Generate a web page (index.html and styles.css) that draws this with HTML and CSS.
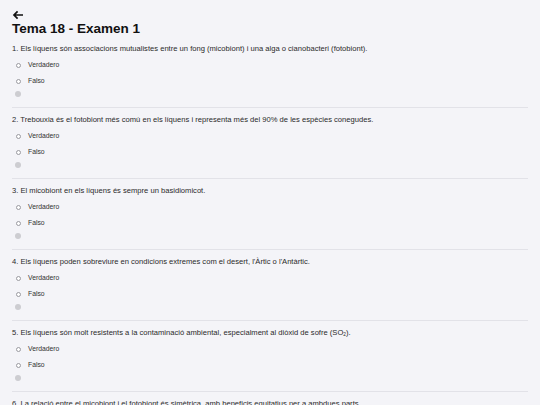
FILE: index.html
```html
<!DOCTYPE html>
<html lang="ca">
<head>
<meta charset="utf-8">
<title>Tema 18 - Examen 1</title>
<link rel="stylesheet" href="styles.css">
</head>
<body>
<div class="page">
  <header class="header">
    <div class="back">
      <svg width="12" height="12" viewBox="0 0 12 12" aria-hidden="true">
        <path d="M11 6H2.2M5.6 2.4L2 6l3.6 3.6" fill="none" stroke="#111" stroke-width="1.7" stroke-linecap="butt" stroke-linejoin="miter"/>
      </svg>
    </div>
    <h1 class="title">Tema 18 - Examen 1</h1>
  </header>

  <section class="question">
    <p class="q-text">1. Els líquens són associacions mutualistes entre un fong (micobiont) i una alga o cianobacteri (fotobiont).</p>
    <label class="option"><span class="radio"></span>Verdadero</label>
    <label class="option"><span class="radio"></span>Falso</label>
    <span class="dot"></span>
  </section>

  <section class="question">
    <p class="q-text">2. Trebouxia és el fotobiont més comú en els líquens i representa més del 90% de les espècies conegudes.</p>
    <label class="option"><span class="radio"></span>Verdadero</label>
    <label class="option"><span class="radio"></span>Falso</label>
    <span class="dot"></span>
  </section>

  <section class="question">
    <p class="q-text">3. El micobiont en els líquens és sempre un basidiomicot.</p>
    <label class="option"><span class="radio"></span>Verdadero</label>
    <label class="option"><span class="radio"></span>Falso</label>
    <span class="dot"></span>
  </section>

  <section class="question">
    <p class="q-text">4. Els líquens poden sobreviure en condicions extremes com el desert, l'Àrtic o l'Antàrtic.</p>
    <label class="option"><span class="radio"></span>Verdadero</label>
    <label class="option"><span class="radio"></span>Falso</label>
    <span class="dot"></span>
  </section>

  <section class="question">
    <p class="q-text">5. Els líquens són molt resistents a la contaminació ambiental, especialment al diòxid de sofre (SO<sub>2</sub>).</p>
    <label class="option"><span class="radio"></span>Verdadero</label>
    <label class="option"><span class="radio"></span>Falso</label>
    <span class="dot"></span>
  </section>

  <section class="question">
    <p class="q-text">6. La relació entre el micobiont i el fotobiont és simètrica, amb beneficis equitatius per a ambdues parts.</p>
    <label class="option"><span class="radio"></span>Verdadero</label>
    <label class="option"><span class="radio"></span>Falso</label>
    <span class="dot"></span>
  </section>
</div>
</body>
</html>
```

FILE: styles.css
```css
html, body {
  margin: 0;
  padding: 0;
  background: #f4f4f8;
  height: 100%;
  overflow: hidden;
}

body {
  font-family: "Liberation Sans", Arial, sans-serif;
  color: #222;
}

.page {
  padding: 9px 12px 0 12px;
}

.header {
  display: flex;
  flex-direction: column;
}

.back {
  height: 12px;
  display: flex;
  align-items: center;
}

.back svg {
  display: block;
}

.title {
  margin: 0;
  font-size: 13.5px;
  line-height: 16px;
  font-weight: 700;
  color: #111;
}

.question {
  display: flex;
  flex-direction: column;
  align-items: flex-start;
  padding: 7px 0 10px 0;
  border-bottom: 1px solid #e2e2e8;
}

.q-text {
  margin: 0;
  font-size: 7.6px;
  line-height: 10px;
  color: #2a2a2a;
}

.q-text sub {
  font-size: 4.8px;
  vertical-align: -1px;
  line-height: 0;
}

.option {
  display: flex;
  align-items: center;
  margin-top: 6px;
  height: 10px;
  font-size: 6.8px;
  line-height: 10px;
  color: #333;
}

.radio {
  box-sizing: border-box;
  width: 5px;
  height: 5px;
  border: 0.6px solid #9a9aa0;
  border-radius: 50%;
  background: #fff;
  margin-left: 4px;
  margin-right: 7px;
}

.dot {
  display: block;
  width: 6px;
  height: 6px;
  margin-top: 5px;
  margin-left: 3px;
  border-radius: 50%;
  background: #cdcdd1;
}
```
